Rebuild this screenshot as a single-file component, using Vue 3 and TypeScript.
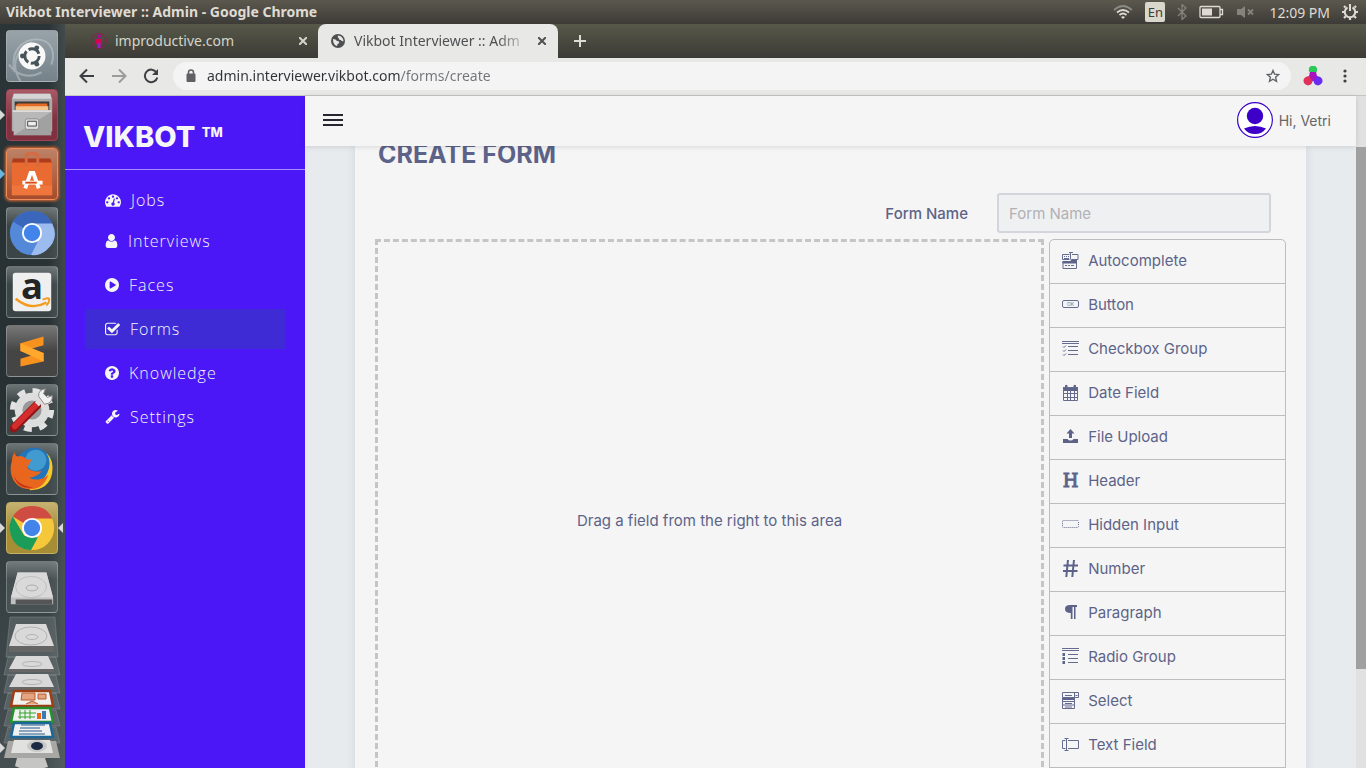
<script setup lang="ts">
import { ref } from 'vue'

interface NavItem { label: string; width: number; viewBox: string; path: string }
interface Field { label: string; line?: string; fill?: string; glyph?: string; glyphClass?: string; caption?: string; dashed?: boolean }

const address = ref('admin.interviewer.vikbot.com/forms/create')
const formName = ref('')
const active = ref('Forms')

const nav: NavItem[] = [
  { label: 'Jobs', width: 16, viewBox: '0 128 1792 1536', path: 'M384 1152q0-53-37.5-90.5t-90.5-37.5-90.5 37.5-37.5 90.5 37.5 90.5 90.5 37.5 90.5-37.5 37.5-90.5zm192-448q0-53-37.5-90.5t-90.5-37.5-90.5 37.5-37.5 90.5 37.5 90.5 90.5 37.5 90.5-37.5 37.5-90.5zm428 481l101-382q6-26-7.5-48.5t-38.5-29.5-48 6.5-30 39.5l-101 382q-60 5-107 43.5t-63 98.5q-20 77 20 146t117 89 146-20 89-117q16-60-6-117t-72-91zm660-33q0-53-37.5-90.5t-90.5-37.5-90.5 37.5-37.5 90.5 37.5 90.5 90.5 37.5 90.5-37.5 37.5-90.5zm-640-640q0-53-37.5-90.5t-90.5-37.5-90.5 37.5-37.5 90.5 37.5 90.5 90.5 37.5 90.5-37.5 37.5-90.5zm448 192q0-53-37.5-90.5t-90.5-37.5-90.5 37.5-37.5 90.5 37.5 90.5 90.5 37.5 90.5-37.5 37.5-90.5zm320 448q0 261-141 483-19 29-54 29h-1402q-35 0-54-29-141-221-141-483 0-182 71-348t191-286 286-191 348-71 348 71 286 191 191 286 71 348z' },
  { label: 'Interviews', width: 13, viewBox: '256 128 1280 1536', path: 'M1536 1399q0 109-62.5 187t-150.5 78h-854q-88 0-150.5-78t-62.5-187q0-85 8.5-160.5t31.5-152 58.5-131 94-89 134.5-34.5q131 128 313 128t313-128q76 0 134.5 34.5t94 89 58.5 131 31.5 152 8.5 160.5zm-256-887q0 159-112.5 271.5t-271.5 112.5-271.5-112.5-112.5-271.5 112.5-271.5 271.5-112.5 271.5 112.5 112.5 271.5z' },
  { label: 'Faces', width: 14, viewBox: '128 128 1536 1536', path: 'M896 128q209 0 385.5 103t279.5 279.5 103 385.5-103 385.5-279.5 279.5-385.5 103-385.5-103-279.5-279.5-103-385.5 103-385.5 279.5-279.5 385.5-103zm384 823q32-18 32-55t-32-55l-544-320q-31-19-64-1-32 19-32 56v640q0 37 32 56 16 8 32 8 17 0 32-9z' },
  { label: 'Forms', width: 15, viewBox: '64 64 1664 1536', path: 'M1472 930v318q0 119-84.5 203.5t-203.5 84.5h-832q-119 0-203.5-84.5t-84.5-203.5v-832q0-119 84.5-203.5t203.5-84.5h832q63 0 117 25 15 7 18 23 3 17-9 29l-49 49q-10 10-23 10-3 0-9-2-23-6-45-6h-832q-66 0-113 47t-47 113v832q0 66 47 113t113 47h832q66 0 113-47t47-113v-254q0-13 9-22l64-64q10-10 23-10 6 0 12 3 20 8 20 29zm231-489l-814 814q-24 24-57 24t-57-24l-430-430q-24-24-24-57t24-57l110-110q24-24 57-24t57 24l263 263 647-647q24-24 57-24t57 24l110 110q24 24 24 57t-24 57z' },
  { label: 'Knowledge', width: 14, viewBox: '128 128 1536 1536', path: 'M1024 1376v-192q0-14-9-23t-23-9h-192q-14 0-23 9t-9 23v192q0 14 9 23t23 9h192q14 0 23-9t9-23zm256-672q0-88-55.5-163t-138.5-116-170-41q-243 0-371 213-15 24 8 42l132 100q7 6 19 6 16 0 25-12 53-68 86-92 34-24 86-24 48 0 85.5 26t37.5 59q0 38-20 61t-68 45q-63 28-115.5 86.5t-52.5 125.5v36q0 14 9 23t23 9h192q14 0 23-9t9-23q0-19 21.5-49.5t54.5-49.5q32-18 49-28.5t46-35 44.5-48 28-60.5 12.5-81zm384 192q0 209-103 385.5t-279.5 279.5-385.5 103-385.5-103-279.5-279.5-103-385.5 103-385.5 279.5-279.5 385.5-103 385.5 103 279.5 279.5 103 385.5z' },
  { label: 'Settings', width: 15, viewBox: '64 128 1664 1664', path: 'M448 1472q0-26-19-45t-45-19-45 19-19 45 19 45 45 19 45-19 19-45zm644-420l-682 682q-37 37-90 37-52 0-91-37l-106-108q-38-36-38-90 0-53 38-91l681-681q39 98 114.5 173.5t173.5 114.5zm634-435q0 39-23 106-47 134-164.5 217.5t-258.5 83.5q-185 0-316.5-131.5t-131.5-316.5 131.5-316.5 316.5-131.5q58 0 121.5 16.5t107.5 46.5q16 11 16 28t-16 28l-293 169v224l193 107q5-3 79-48.5t135.5-81 70.5-35.5q15 0 23.5 10t8.5 25z' }
]

const fields: Field[] = [
  { label: 'Autocomplete', line: 'M7.5 2.5H.5v5h7M10 2.5h6v5h-5.500M7 .5h4M8.500 .5v7M2 4.500h1M4 4.500h1M6 4.500h1M2 6.500h5M1 16.500V9.500M1 16.500h13.500V8.500M3 13.500h2M6 13.500h2M9 13.500h3', fill: 'M.5 9h8l1-2h5.500v4.500H.5z' },
  { label: 'Button', line: 'M2 4.500h13q1.500 0 1.500 1.500v4q0 1.500-1.500 1.500H2Q.5 11.500.5 10V6Q.5 4.500 2 4.500z', caption: 'OK' },
  { label: 'Checkbox Group', line: 'M0 1.500h17M0 3.500h17M6 6.500h10M6 10.500h10M6 14.500h10M1 6.500l1 1 2-2M1 10.500l1 1 2-2M1 14.500l1 1 2-2' },
  { label: 'Date Field', line: 'M1.500 3.500h14v13H1.500zM5.500 6v10M8.500 6v10M12.500 6v10M1 9.500h15M1 13.500h15', fill: 'M1 3h2V1.500Q4 0 5.500 1.500V3h6V1.500Q13 0 14 1.500V3h2v4H1z' },
  { label: 'File Upload', fill: 'M8.500 1l4 4.500H10V10H7V5.500H4.500zM1 11h4.500q1 1.500 3 1.500t3-1.500H16v4H1z' },
  { label: 'Header', glyph: 'H', glyphClass: 'serif' },
  { label: 'Hidden Input', line: 'M1.500 4.500h14q1 0 1 1v5q0 1-1 1h-14q-1 0-1-1v-5q0-1 1-1z', dashed: true },
  { label: 'Number', fill: 'M5 0h2L6.500 4.500h4L11 0h2l-.5 4.500H16v2h-3.700L12 10h3.500v2h-3.700L11.300 17h-2L9.800 12h-4L5.300 17h-2L3.800 12H1v-2h3l.3-3.500H1.500v-2h3zM6.300 6.500L6 10h4l.3-3.500z' },
  { label: 'Paragraph', fill: 'M8 1h7v2h-1.500v12H12V3h-1.500v12H8.800V9Q3 9 3 5q0-4 5-4z' },
  { label: 'Radio Group', line: 'M0 .5h17M0 2.500h17M6 6.500h10M6 10.500h10M6 14.500h10', fill: 'M.5 5h2.500v3H.5zM.5 9h2.500v3H.5zM.5 13h2.500v3H.5z' },
  { label: 'Select', line: 'M.5 .5h16v5H.5zM12.500 .5v5M.5 5.500v11h12v-11M.5 9.500h12M.5 13h12M3 3.500h7M3 11.500h7M3 15h7M13.500 3.500h2', fill: 'M1 5h11v3H1z' },
  { label: 'Text Field', line: 'M3.500 4.500h-3v8h3M6 4.500h10.500v8H6M4.500 2.500v12M2.500 2.500h4M2.500 14.500h4' }
]
</script>

<template>
  <div class="desktop">
    <header class="panel">
      <h1 class="window-title">Vikbot Interviewer :: Admin - Google Chrome</h1>
      <div class="indicators">
        <svg width="20" height="16" viewBox="0 0 20 16" fill="none" stroke="#dfdbd2" stroke-width="1.800"><path d="M1 6q9-8 18 0" stroke="#8b8983" /><path d="M4 8.500q6-5 12 0M6.500 11q3.500-3 7 0" /><path d="M8 13l2 2 2-2q-2-1.500-4 0z" fill="#dfdbd2" stroke="none" /></svg>
        <span class="lang">En</span>
        <svg width="10" height="16" viewBox="0 0 10 16" fill="none" stroke="#85837c" stroke-width="1.300"><path d="M1 4l8 8-4 3.500V.5L9 4l-8 8" /></svg>
        <svg width="26" height="14" viewBox="0 0 26 14" fill="none" stroke="#dfdbd2" stroke-width="1.300"><rect x="1" y="1.500" width="20" height="11" rx="1" /><path d="M21 4.500h2.500v5H21" /><path d="M3 3.500h10v7H3z" fill="#dfdbd2" stroke="none" /></svg>
        <svg width="20" height="14" viewBox="0 0 20 14"><path d="M0 4h4l4-3v12l-4-3H0z" fill="#85837c" /><path d="M11 4.500l5 5M16 4.500l-5 5" stroke="#85837c" stroke-width="1.800" /></svg>
        <time>12:09 PM</time>
        <svg width="16" height="16" viewBox="0 0 16 16" fill="none" stroke="#dfdbd2"><path d="M5.500 3.500a5.200 5.200 0 1 0 5 0" stroke-width="2" /><path d="M8 0v7" stroke-width="2" /><path d="M2 2l1.500 1.500M14 2l-1.500 1.500M0 8h2.500M13.500 8H16M2 14l1.800-1.800M14 14l-1.800-1.800M8 13.500V16" stroke-width="2.200" /></svg>
      </div>
    </header>

    <div class="workspace">
      <nav class="launcher" aria-label="Launcher">
        <button class="tile dash" aria-label="Dash">
          <svg viewBox="0 0 52 52"><g fill="none" stroke="#c8ced1" stroke-width="2" opacity=".5"><path d="M8 43C2 18 20 7 34 9s16 16 12 26" /><path d="M2 35q14 18 34 8M14 52C2 34 12 16 26 12" /></g><circle cx="26" cy="26" r="14" fill="#f8f8f8" /><circle cx="26" cy="26" r="7.500" fill="none" stroke="#47545a" stroke-width="3" stroke-dasharray="13 2.700" /><g fill="#47545a"><circle cx="16" cy="26" r="2.500" /><circle cx="31" cy="17.500" r="2.500" /><circle cx="31" cy="34.500" r="2.500" /></g></svg>
        </button>
        <button class="tile files" aria-label="Files">
          <i class="pip left"></i>
          <svg viewBox="0 0 52 52"><path d="M7 4h38l2 5v34H5V9z" fill="#aaa" /><path d="M7 4h38l1 5H6z" fill="#d5d5d5" /><path d="M8 12h36v10H8z" fill="#3c3936" /><path d="M9 16l2-2h31v8H9z" fill="#e46b28" /><path d="M9 17h34v5H9z" fill="#f4c58d" /><path d="M6 21h40v26H7z" fill="#b8b8b8" /><path d="M6 21h40v2H6z" fill="#ddd" /><path d="M7 47l39-24v24z" fill="#8a8a8a" opacity=".5" /><rect x="19" y="30" width="14" height="11" rx="2" fill="#ddd" stroke="#888" /><path d="M21.500 32.500h9v5h-9z" fill="#eee" stroke="#444" /></svg>
        </button>
        <button class="tile software" aria-label="Ubuntu Software">
          <i class="pip left blue"></i>
          <svg viewBox="0 0 52 52"><path d="M6 10h39l2 5H5z" fill="#ad3c1c" /><path d="M5 14h42v34H5z" fill="#e96b31" /><path d="M5 38h42v10H5z" fill="#f17c42" opacity=".6" /><path d="M20 18V8q0-3 3-3h6q3 0 3 3v10" fill="none" stroke="#d56a43" stroke-width="3" /><path d="M19 41l5.500-16h3L33 41" fill="none" stroke="#fff" stroke-width="4" /><path d="M16 35h21" stroke="#fff" stroke-width="4" /><path d="M19 35h12" stroke="#dc4d14" stroke-width="2" /></svg>
        </button>
        <button class="tile" aria-label="Chromium">
          <svg viewBox="0 0 52 52"><circle cx="26" cy="26" r="23" fill="#5488d8" /><path d="M26 26L6 14Q13 3 26 3q15 0 21 13z" fill="#3a66bb" /><path d="M26 26V16h21q8 16-6 28-7 6-16 5l9-18z" fill="#9cbcf0" /><circle cx="26" cy="26" r="10.500" fill="#fff" /><circle cx="26" cy="26" r="8.500" fill="#4384ea" /></svg>
        </button>
        <button class="tile" aria-label="Amazon">
          <svg viewBox="0 0 52 52"><rect x="6" y="6" width="40" height="40" rx="3" fill="#efefef" /><text x="26" y="33" text-anchor="middle" font-family="Open Sans" font-weight="700" font-size="38" fill="#242424">a</text><path d="M9 33q16 13 32 4" fill="none" stroke="#f49a1c" stroke-width="2.500" /><path d="M37 34q7-3 7 0 0 3-3 6" fill="none" stroke="#f49a1c" stroke-width="2" /></svg>
        </button>
        <button class="tile sublime" aria-label="Sublime Text">
          <svg viewBox="0 0 52 52"><path d="M14 18l24-7v9l-14 4 14 4v9l-24 5v-8l14-4-14-4z" fill="#f7921e" /><path d="M14 18l24 10v9L14 26z" fill="#ffa82b" /></svg>
        </button>
        <button class="tile" aria-label="System Settings">
          <svg viewBox="0 0 52 52"><circle cx="26" cy="26" r="20" fill="none" stroke="#e2e2e2" stroke-width="6" stroke-dasharray="8 7.700" /><circle cx="26" cy="26" r="14" fill="#999" stroke="#ddd" stroke-width="8" /><path d="M7 45L31 21" stroke="#8e1717" stroke-width="9" stroke-linecap="round" /><path d="M8 43L31 20" stroke="#d52d2d" stroke-width="6" stroke-linecap="round" /><path d="M31 20l6-6" stroke="#ddd" stroke-width="6" /><path d="M33 12q-1-7 7-8l-2 5 4 4 5-2q1 8-8 9z" fill="#f0f0f0" stroke="#888" /></svg>
        </button>
        <button class="tile" aria-label="Firefox">
          <svg viewBox="0 0 52 52"><circle cx="28" cy="23" r="19" fill="#2374b8" /><circle cx="30" cy="17" r="11" fill="#55b4df" opacity=".6" /><path d="M41 9q6 10 1 21-5 12-20 12l2 6q20 0 23-18 2-13-6-21z" fill="#f7c82c" /><path d="M8 8q0 4 3 5 5-2 10 3h5q-4 5-5 9 6 5 15 3-4 6-13 7 11 5 20-3-5 15-19 15C7 47 1 31 5 18q0-5 3-10z" fill="#e9661f" /><path d="M5 24q1 19 22 21-19 4-22-21z" fill="#c83418" /></svg>
        </button>
        <button class="tile chrome" aria-label="Google Chrome">
          <i class="pip left"></i><i class="pip right"></i>
          <svg viewBox="0 0 52 52"><circle cx="26" cy="26" r="23" fill="#f5c73b" /><path d="M26 26L6 14Q13 3 26 3q15 0 21 13H26z" fill="#cf4c42" /><path d="M6 14l12 20 14 2-7 13Q8 48 3.500 32 1 22 6 14z" fill="#1b9c58" /><circle cx="26" cy="26" r="10.500" fill="#fff" /><circle cx="26" cy="26" r="8.500" fill="#4384ea" /></svg>
        </button>
        <button class="tile" aria-label="Disk">
          <svg viewBox="0 0 52 52"><path d="M11 11h30l7 27v6H4v-6z" fill="#bfbfbf" /><path d="M11 11h30l7 26H4z" fill="#d9d9d9" /><path d="M9 39h38v5H9z" fill="#555" /><ellipse cx="25" cy="26" rx="16" ry="11" fill="none" stroke="#bdbdbd" /><ellipse cx="26" cy="27" rx="6" ry="3" fill="none" stroke="#aaa" /></svg>
        </button>
        <button class="stack" aria-label="More items">
          <i class="pip left low"></i>
          <svg viewBox="0 0 58 153">
            <g fill="#8e9697" fill-opacity=".3" stroke="#aab0b0" stroke-opacity=".3"><path d="M7 1h45l3 40H3z" /><path d="M5 41h48l4 18H1zM5 59h48l4 18H1zM5 77h48l4 16H1zM5 94h48l4 16H1zM5 111h48l4 16H1z" /></g>
            <g fill="#d9d9d9"><path d="M13 8h30l8 22H6z" /><path d="M13 40h32l6 13H6zM13 58h32l6 13H6z" /></g>
            <g fill="#666"><path d="M6 30h45v6H6zM6 53h45v3H6zM6 71h45v3H6z" /></g>
            <g fill="none" stroke="#b3b3b3"><ellipse cx="28" cy="20" rx="16" ry="9" /><ellipse cx="29" cy="21" rx="6" ry="2.500" /><ellipse cx="29" cy="48" rx="10" ry="2.500" /><ellipse cx="29" cy="66" rx="10" ry="2.500" /></g>
            <g fill="#f1f1ef" stroke-width="2.500"><path d="M11 75h36l3 15H8z" stroke="#9d3e14" /><path d="M11 92h36l3 14H8z" stroke="#23912c" /><path d="M11 107h36l3 14H8z" stroke="#1b6797" /></g>
            <path d="M19 77h13v7H18zM35 78h8v5h-8zM23 88l6-3 6 3" fill="#e3a47f" stroke="#bb5b30" />
            <path d="M17 94v9M22 94v9M27 94v9M16 97h17M15 101h17" stroke="#35a32e" /><path d="M34 97h4v6h-4z" fill="#e86a19" /><path d="M39 95h4v8h-4z" fill="#377bb8" />
            <path d="M18 109h24M17 112h20M16 115h23M16 118h26" stroke="#205b8c" />
            <path d="M5 125h48l4 17H1z" fill="#a7a7a3" /><path d="M11 124h36l3 13H8z" fill="#e1e1df" /><ellipse cx="34" cy="130" rx="10" ry="6" fill="#c8c8c8" /><ellipse cx="34" cy="130" rx="6" ry="4" fill="#1c2942" />
            <path d="M14 142h28l3 9-8 2H19l-7-3z" fill="#c5c6c2" />
          </svg>
        </button>
      </nav>

      <div class="browser">
        <div class="tabs" role="tablist">
          <div class="tab" role="tab">
            <svg width="16" height="16" viewBox="0 0 16 16"><circle cx="8" cy="8" r="7.500" fill="none" stroke="#9b174f" stroke-width=".8" /><circle cx="8" cy="3.500" r="1.800" fill="#b400a0" /><path d="M5 6h6v5H9.500v4h-3v-4H5z" fill="#d50550" /><path d="M6.500 10h3v5h-3z" fill="#9420c8" /></svg>
            <span class="tab-title">improductive.com</span>
            <button class="close" aria-label="Close tab"><svg width="8" height="8" viewBox="0 0 8 8"><path d="M0 0l8 8M8 0L0 8" /></svg></button>
          </div>
          <div class="tab current" role="tab" aria-selected="true">
            <svg width="14" height="14" viewBox="0 0 14 14"><circle cx="7" cy="7" r="7" fill="#4d4f51" /><path d="M2 5q3 0 4 2 3 0 2 2-2 1-2 3-4-1-4-7zM7 1.500q-1 2 1 3 0 2 2 1.500 1 2 2.500 1Q12 2 7 1.500z" fill="#e8e8e6" /></svg>
            <span class="tab-title">Vikbot Interviewer :: Adm</span>
            <button class="close" aria-label="Close tab"><svg width="8" height="8" viewBox="0 0 8 8"><path d="M0 0l8 8M8 0L0 8" /></svg></button>
          </div>
          <button class="new-tab" aria-label="New tab"><svg width="12" height="12" viewBox="0 0 12 12"><path d="M6 0v12M0 6h12" stroke="#dcdcd2" stroke-width="2" /></svg></button>
        </div>

        <div class="toolbar">
          <button aria-label="Back"><svg width="16" height="16" viewBox="0 0 16 16"><path d="M15 8H2M8 1.500L1.500 8 8 14.500" /></svg></button>
          <button class="faded" aria-label="Forward"><svg width="16" height="16" viewBox="0 0 16 16"><path d="M1 8h13M8 1.500L14.500 8 8 14.500" /></svg></button>
          <button aria-label="Reload"><svg width="16" height="16" viewBox="0 0 16 16"><path d="M13.500 4.500A6.300 6.300 0 1 0 14.300 9.500" /><path d="M15 1v6H9z" class="solid" /></svg></button>
          <div class="omnibox">
            <svg width="10" height="13" viewBox="0 0 10 13"><path d="M1 5h8v7.500H1z" fill="#5f6164" stroke="#5f6164" /><path d="M2.500 5V3.500Q2.500 1 5 1t2.500 2.500V5" fill="none" stroke="#5f6164" stroke-width="1.500" /></svg>
            <input v-model="address" class="url" aria-label="Address" spellcheck="false" />
            <button aria-label="Bookmark"><svg width="14" height="14" viewBox="0 0 14 14"><path d="M7 1.500l1.600 3.700 4 .4-3 2.700.9 4L7 10.200l-3.500 2.100.9-4-3-2.700 4-.4z" class="star" /></svg></button>
          </div>
          <button class="extension" aria-label="Extension"><svg width="20" height="20" viewBox="0 0 20 20"><path d="M10 12L6 5a4.200 4.200 0 1 1 8 0z" class="g" /><path d="M10 9L4 10.500a4.500 4.500 0 1 0 5 6.500z" class="r" /><path d="M10 9l6 1.500a4.500 4.500 0 1 1-5 6.500z" class="b" /><path d="M10 16l-4-6 1-4h6l1 4z" class="p" /></svg></button>
          <button aria-label="Menu"><svg width="4" height="14" viewBox="0 0 4 14"><circle cx="2" cy="2" r="1.600" class="dot" /><circle cx="2" cy="7" r="1.600" class="dot" /><circle cx="2" cy="12" r="1.600" class="dot" /></svg></button>
        </div>

        <div class="page">
          <aside class="sidebar">
            <h2 class="brand">VIKBOT <sup>TM</sup></h2>
            <nav class="menu" aria-label="Main">
              <a v-for="item in nav" :key="item.label" href="#" :class="{ active: active === item.label }" @click.prevent="active = item.label">
                <svg :width="item.width" height="14" :viewBox="item.viewBox"><path :d="item.path" fill="currentColor" /></svg>
                <span>{{ item.label }}</span>
              </a>
            </nav>
          </aside>

          <div class="content">
            <header class="topbar">
              <button class="burger" aria-label="Toggle menu"><i></i><i></i><i></i></button>
              <a class="account" href="#">
                <svg width="36" height="36" viewBox="0 0 36 36"><circle cx="18" cy="18" r="17.400" fill="#fff" stroke="#3c00c8" stroke-width="1.200" /><circle cx="18" cy="14" r="8.200" fill="#3c00c8" /><path d="M7 26.500q11-5 22 0Q25 32 18 32T7 26.500z" fill="#3c00c8" /></svg>
                <span>Hi, Vetri</span>
              </a>
            </header>
            <main class="scroller">
              <section class="card">
                <h3>CREATE FORM</h3>
                <div class="name-row">
                  <label for="form-name">Form Name</label>
                  <input id="form-name" v-model="formName" type="text" placeholder="Form Name" />
                </div>
                <div class="builder">
                  <div class="drop-area">Drag a field from the right to this area</div>
                  <ul class="fields">
                    <li v-for="field in fields" :key="field.label">
                      <span v-if="field.glyph" :class="['glyph', field.glyphClass]" aria-hidden="true">{{ field.glyph }}</span>
                      <svg v-else width="17" height="17" viewBox="0 0 17 17">
                        <path v-if="field.fill" :d="field.fill" fill="#5d6388" fill-rule="evenodd" />
                        <path v-if="field.line" :d="field.line" fill="none" stroke="#666c90" :stroke-dasharray="field.dashed ? '1 1' : undefined" />
                        <text v-if="field.caption" x="8.500" y="10" text-anchor="middle" class="caption">{{ field.caption }}</text>
                      </svg>
                      <span>{{ field.label }}</span>
                    </li>
                  </ul>
                </div>
              </section>
            </main>
          </div>
          <div class="scrollbar"><i></i></div>
        </div>
      </div>
    </div>
  </div>
</template>

<style>
html, body, #app { height: 100%; }
body { margin: 0; overflow: hidden; }
</style>

<style scoped>
* { box-sizing: border-box; }
button { padding: 0; border: 0; background: none; font: inherit; color: inherit; }
svg { display: block; flex: none; }
.desktop { height: 100vh; display: flex; flex-direction: column; overflow: hidden; font-family: "Noto Sans", "Open Sans", sans-serif; }

.panel { flex: none; height: 24px; display: flex; align-items: center; justify-content: space-between; padding: 0 8px 0 6px; background: linear-gradient(#5c584e, #3d3b37); color: #dfdbd2; font-size: 14px; }
.window-title { margin: 0; font-size: 14px; line-height: 24px; font-weight: 700; }
.indicators { display: flex; align-items: center; gap: 12px; }
.lang { width: 20px; height: 20px; border-radius: 2px; background: #dad7cd; color: #3f3d38; font-size: 13px; line-height: 20px; text-align: center; }

.workspace { flex: 1; min-height: 0; display: flex; }
.launcher { flex: none; width: 65px; display: flex; flex-direction: column; align-items: flex-start; gap: 7px; padding: 6px 0 0 6px; overflow: hidden; background: linear-gradient(90deg, transparent 48px, rgba(110, 117, 118, .35) 100%), linear-gradient(#2b3436, #273133 50%, #465052); }
.tile { position: relative; flex: none; width: 52px; height: 52px; border-radius: 4px; border: 1px solid rgba(200, 205, 205, .35); background: linear-gradient(rgba(190, 195, 195, .45), rgba(110, 118, 120, .28) 35%, rgba(110, 118, 120, .28)); }
.tile svg { width: 50px; height: 50px; overflow: visible; }
.dash { background: linear-gradient(#98a3a9, #75828a); }
.dash svg { overflow: hidden; }
.files { background: linear-gradient(#a85a66, #80303f 60%); border-color: #a04556; }
.software { background: linear-gradient(#bd8266, #a44c2b); border-color: #f18d5a; box-shadow: 0 0 3px 1px #e06a35; }
.sublime { background: linear-gradient(#777, #454545 50%); }
.chrome { background: linear-gradient(#c5b273, #a78e36 50%); border-color: #c2b064; }
.pip { position: absolute; top: 20px; width: 0; height: 0; border: 5px solid transparent; }
.pip.left { left: -7px; border-left-color: #d8d8d8; border-right-width: 0; }
.pip.right { right: -6px; border-right-color: #d8d8d8; border-left-width: 0; }
.pip.blue { border-left-color: #68b6e0; }
.pip.low { left: -3px; top: 127px; }
.stack { position: relative; flex: none; width: 58px; height: 153px; margin: -4px 0 0 -3px; }
.stack svg { width: 58px; height: 153px; }

.browser { flex: 1; min-width: 0; display: flex; flex-direction: column; }
.tabs { flex: none; height: 34px; display: flex; background: linear-gradient(#57594a, #3c3a35); }
.tab { display: flex; align-items: center; gap: 8px; width: 253px; padding: 0 11px 0 26px; color: #d4d4ca; font-size: 14px; }
.tab-title { flex: 1; min-width: 0; white-space: nowrap; line-height: 34px; }
.tab.current { width: 240px; gap: 9px; padding: 0 12px 0 13px; border-radius: 8px 8px 0 0; background: #e8e8e6; color: #4e5052; }
.tab.current .tab-title { -webkit-mask-image: linear-gradient(90deg, #000 82%, transparent); mask-image: linear-gradient(90deg, #000 82%, transparent); }
.close svg path { stroke: currentColor; stroke-width: 2; }
.new-tab { width: 44px; display: flex; align-items: center; justify-content: center; }

.toolbar { flex: none; height: 38px; display: flex; align-items: center; gap: 16px; padding: 0 19px 2px 14px; background: #e8e8e6; border-bottom: 1px solid #c4c4c2; }
.toolbar > button:not(.extension) svg path { fill: none; stroke: #3d3f42; stroke-width: 2; }
.toolbar > button.faded svg path { stroke: #9a9b9b !important; }
.toolbar > button:not(.extension) svg path.solid { fill: #3d3f42; stroke: none; }
.extension { margin: 0 4px 0 -4px; }
.extension .g { fill: #2bc957; }
.extension .r { fill: #e0305a; }
.extension .b { fill: #6a2cf0; }
.extension .p { fill: #a814c0; }
.dot { fill: #3d3f42; }
.omnibox { flex: 1; min-width: 0; height: 28px; display: flex; align-items: center; margin-left: -2px; padding: 0 11px 0 13px; border-radius: 14px; background: #f4f4f4; }
.url { flex: 1; min-width: 0; height: 28px; margin-left: 11px; padding: 0; border: 0; outline: 0; font: 14px "Noto Sans", sans-serif; color: transparent; background: linear-gradient(90deg, #303236 194px, #727477 194px); -webkit-background-clip: text; background-clip: text; }
.star { fill: none; stroke: #606265; stroke-width: 1.400; }

.page { flex: 1; min-height: 0; display: flex; font-family: Inter, sans-serif; }
.sidebar { flex: none; width: 240px; background: #4b17f6; color: #f5f5f5; }
.brand { margin: 0; height: 74px; padding: 20px 18px 0; border-bottom: 1px solid rgba(255, 255, 255, .5); font-size: 29px; line-height: 42px; font-weight: 800; }
.brand sup { font-size: 13px; line-height: 13px; vertical-align: 10px; }
.menu { display: flex; flex-direction: column; gap: 4px; padding: 11px 20px 0; }
.menu a { display: flex; align-items: center; gap: 10px; height: 40px; padding-left: 20px; color: #f5f5f5; font: 300 16px "Open Sans", sans-serif; letter-spacing: 1px; text-decoration: none; }
.menu a:first-child { height: 38px; margin-bottom: -2px; }
.menu a.active { background: #3f2bd6; }

.content { flex: 1; min-width: 0; display: flex; flex-direction: column; background: #e7ebee; }
.topbar { position: relative; flex: none; height: 50px; display: flex; align-items: center; justify-content: space-between; padding: 0 25px 2px 18px; background: #f5f5f5; box-shadow: 0 1px 5px rgba(0, 0, 0, .12); }
.burger { display: grid; gap: 3px; width: 20px; }
.burger i { height: 2px; background: #25262e; }
.account { display: flex; align-items: center; gap: 6px; color: #666; font-size: 14px; text-decoration: none; }
.scroller { flex: 1; min-height: 0; overflow: hidden; padding: 0 50px; }
.card { display: flow-root; min-height: 100%; padding: 0 20px; background: #f5f5f5; box-shadow: 0 0 8px rgba(60, 90, 110, .15); color: #5d6388; }
.card h3 { margin: -8px 0 0 3px; font-size: 25px; line-height: 32px; font-weight: 700; }
.name-row { display: flex; align-items: center; justify-content: flex-end; gap: 29px; margin: 23px 15px 6px 0; font-size: 15px; font-weight: 500; }
.name-row input { width: 274px; height: 40px; padding: 0 10px; border: 2px solid #d4d5dc; border-radius: 3px; background: #eff0f2; color: #5d6388; font: 15px Inter, sans-serif; }
.name-row input::placeholder { color: #b1b1b4; }
.builder { display: flex; align-items: flex-start; gap: 5px; font-size: 15px; }
.drop-area { flex: 1; min-height: 564px; display: flex; align-items: center; justify-content: center; padding-bottom: 2px; border: 3px dashed #c5c5c5; }
.fields { flex: none; width: 26%; margin: 0; padding: 0; list-style: none; border: 1px solid #bdbdbf; border-radius: 5px 5px 0 0; }
.fields li { display: flex; align-items: center; gap: 9px; height: 44px; padding: 0 12px 2px; border-bottom: 1px solid #bdbdbf; }
.glyph { width: 17px; display: flex; justify-content: center; line-height: 20px; }
.glyph.serif { font-family: "DejaVu Serif", serif; font-size: 18px; -webkit-text-stroke: 1px #5d6388; }
.caption { font: 5px Inter, sans-serif; fill: #6f7597; }
.scrollbar { flex: none; width: 10px; padding-top: 51px; background: #e1e1e1; }
.scrollbar i { display: block; height: 84%; background: #a0a0a0; }
</style>
